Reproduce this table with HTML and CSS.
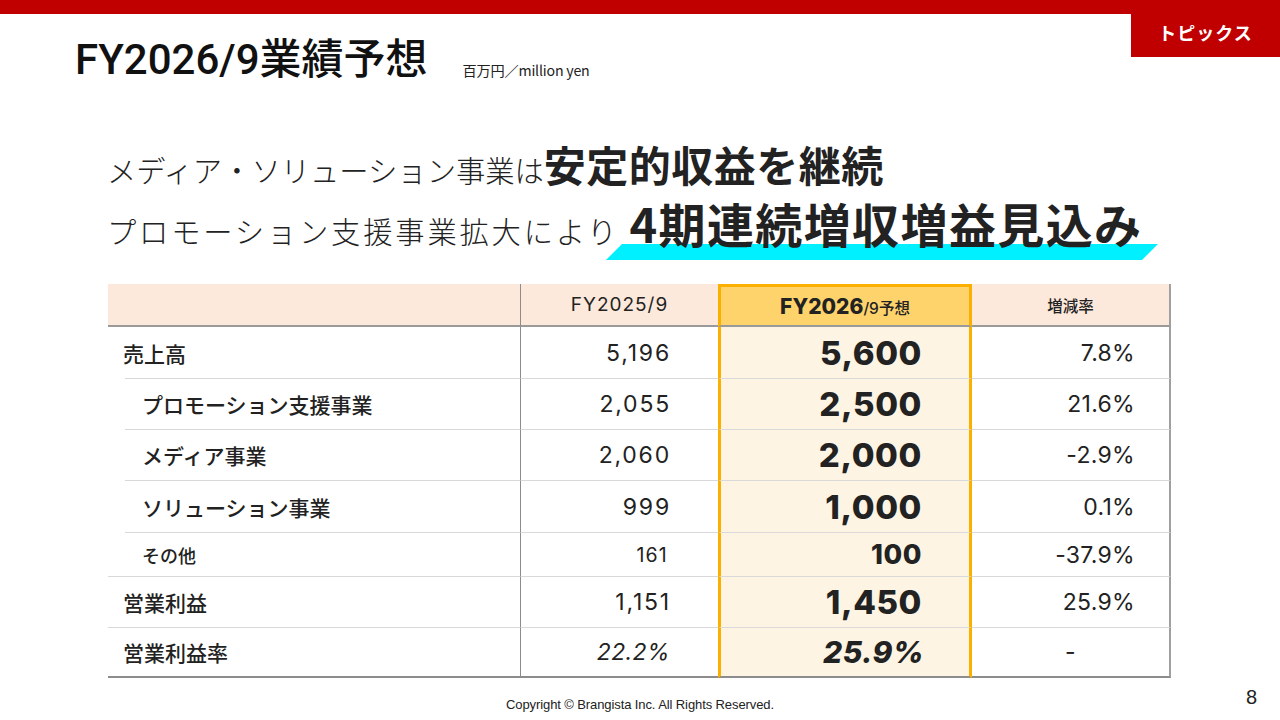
FILE: index.html
```html
<!DOCTYPE html>
<html lang="ja">
<head>
<meta charset="utf-8">
<title>FY2026/9業績予想</title>
<link rel="stylesheet" href="styles.css">
</head>
<body>
<div class="slide">
  <div class="topbar"></div>
  <header class="header">
    <div class="titlegroup">
      <h1 class="title">FY2026/9業績予想</h1>
      <span class="unit">百万円／million yen</span>
    </div>
    <div class="badge">トピックス</div>
  </header>

  <section class="lead">
    <p class="lead-line l1">メディア・ソリューション事業は<strong class="em1">安定的収益を継続</strong></p>
    <p class="lead-line l2">プロモーション支援事業拡大により<strong class="em2">4期連続増収増益見込み</strong></p>
  </section>

  <table class="pl">
    <thead>
      <tr>
        <th class="c1"></th>
        <th class="c2">FY2025/9</th>
        <th class="c3"><span class="fy">FY2026</span><span class="fysub">/9予想</span></th>
        <th class="c4">増減率</th>
      </tr>
    </thead>
    <tbody>
      <tr class="r-main sep-in">
        <td class="c1">売上高</td>
        <td class="c2">5,196</td>
        <td class="c3">5,600</td>
        <td class="c4">7.8%</td>
      </tr>
      <tr class="r-sub sep-in">
        <td class="c1">プロモーション支援事業</td>
        <td class="c2">2,055</td>
        <td class="c3">2,500</td>
        <td class="c4">21.6%</td>
      </tr>
      <tr class="r-sub sep-in">
        <td class="c1">メディア事業</td>
        <td class="c2">2,060</td>
        <td class="c3">2,000</td>
        <td class="c4">-2.9%</td>
      </tr>
      <tr class="r-sub sep-in r-tall">
        <td class="c1">ソリューション事業</td>
        <td class="c2">999</td>
        <td class="c3">1,000</td>
        <td class="c4">0.1%</td>
      </tr>
      <tr class="r-small">
        <td class="c1">その他</td>
        <td class="c2">161</td>
        <td class="c3">100</td>
        <td class="c4">-37.9%</td>
      </tr>
      <tr class="r-main">
        <td class="c1">営業利益</td>
        <td class="c2">1,151</td>
        <td class="c3">1,450</td>
        <td class="c4">25.9%</td>
      </tr>
      <tr class="r-main r-last">
        <td class="c1">営業利益率</td>
        <td class="c2 it">22.2%</td>
        <td class="c3 it">25.9%</td>
        <td class="c4 dash">-</td>
      </tr>
    </tbody>
  </table>

  <footer class="footer">
    <span class="copy">Copyright © Brangista Inc. All Rights Reserved.</span>
    <span class="pageno">8</span>
  </footer>
</div>
</body>
</html>
```

FILE: styles.css
```css
* { box-sizing: border-box; }
html, body { margin: 0; padding: 0; }
body {
  width: 1280px;
  height: 720px;
  overflow: hidden;
  background: #ffffff;
  color: #222222;
  font-family: "Noto Sans CJK JP", "Noto Sans", sans-serif;
}
.slide { width: 1280px; height: 720px; display: flex; flex-direction: column; }

.topbar { height: 14px; background: #c00000; flex: none; }

.header {
  display: flex;
  justify-content: space-between;
  align-items: flex-start;
  height: 86px;
  flex: none;
}
.titlegroup {
  display: flex;
  align-items: baseline;
  padding-left: 75px;
  padding-top: 22px;
}
.title {
  margin: 0;
  font-family: "Roboto", "Noto Sans CJK JP", sans-serif;
  font-weight: 500;
  font-size: 42px;
  line-height: 48px;
  color: #111111;
}
.unit {
  margin-left: 35px;
  font-size: 14.2px;
  color: #222222;
  letter-spacing: -0.2px;
  position: relative;
  top: 2px;
}
.badge {
  width: 149px;
  height: 43px;
  padding-bottom: 8px;
  background: #c00000;
  color: #ffffff;
  font-weight: 700;
  font-size: 18px;
  letter-spacing: 1px;
  display: flex;
  align-items: center;
  justify-content: center;
}

.lead { padding-left: 107px; padding-top: 37px; flex: none; }
.lead-line {
  margin: 0;
  font-weight: 300;
  font-size: 29.3px;
  color: #222222;
  white-space: nowrap;
}
.l1 { height: 54px; line-height: 54px; }
.l2 { height: 63px; line-height: 64px; letter-spacing: 2.8px; }
.em1 {
  font-weight: 700;
  font-size: 42px;
  letter-spacing: 0.5px;
  color: #222222;
}
.em2 {
  position: relative;
  z-index: 0;
  display: inline-block;
  margin-left: 10px;
  font-weight: 700;
  font-size: 47px;
  letter-spacing: 1.4px;
  color: #222222;
}
.em2::before {
  content: "";
  position: absolute;
  left: -15px;
  right: -8px;
  bottom: -5px;
  height: 16px;
  background: #00f0ff;
  transform: skewX(-45deg);
  z-index: -1;
}

.pl {
  margin-left: 108px;
  margin-top: 30px;
  border-collapse: separate;
  border-spacing: 0;
  table-layout: fixed;
  width: 1063px;
  flex: none;
}
.pl th, .pl td {
  padding: 0;
  white-space: nowrap;
  vertical-align: middle;
}
.pl th.c1, .pl td.c1 { width: 412px; }
.pl th.c2, .pl td.c2 { width: 198px; border-left: 1px solid #8c8c8c; }
.pl th.c3, .pl td.c3 { width: 254px; border-left: 3px solid #fbb000; border-right: 3px solid #fbb000; }
.pl th.c4, .pl td.c4 { width: 199px; border-right: 2px solid #a0a0a0; }

.pl thead th {
  height: 43px;
  background: #fde9db;
  border-bottom: 2px solid #9a9a9a;
  font-family: "Inter", "Noto Sans CJK JP", sans-serif;
  font-weight: 400;
  font-size: 19px;
  letter-spacing: 1px;
  text-align: center;
  color: #222222;
}
.pl thead th.c3 {
  background: #fed36c;
  border-top: 3px solid #fbb000;
  letter-spacing: 0;
}
.pl thead th.c4 { font-family: "Noto Sans CJK JP", sans-serif; font-size: 15.5px; font-weight: 500; letter-spacing: 0; }
.fy { font-weight: 800; font-size: 21px; }
.fysub { font-size: 15.5px; font-weight: 500; }

.pl tbody td {
  height: 51px;
  border-bottom: 1px solid #d9d9d9;
  font-family: "Inter", "Noto Sans CJK JP", sans-serif;
  font-size: 23px;
  color: #222222;
}
.pl tbody tr:first-child td { height: 52px; }
.pl tbody tr.r-tall td { height: 52px; }
.pl tbody tr.sep-in td.c1 {
  border-bottom-color: transparent;
  background-image: linear-gradient(#d9d9d9, #d9d9d9);
  background-repeat: no-repeat;
  background-origin: border-box;
  background-position: 17px 100%;
  background-size: calc(100% - 17px) 1px;
}
.pl tbody td.c1 {
  padding-left: 15px;
  font-family: "Noto Sans CJK JP", sans-serif;
  font-weight: 500;
  font-size: 21px;
}
.pl tbody tr.r-sub td.c1, .pl tbody tr.r-small td.c1 { padding-left: 34px; }
.pl tbody td.c2 { text-align: right; padding-right: 47px; letter-spacing: 1.8px; }
.pl tbody td.c3 {
  text-align: right;
  padding-right: 47px;
  background: #fdf4e3;
  font-weight: 800;
  font-size: 33px;
  letter-spacing: 0.6px;
}
.pl tbody td.c4 { text-align: right; padding-right: 34px; letter-spacing: 0.3px; }
.pl tbody tr.r-small td { height: 44px; }
.pl tbody tr.r-small td.c1 { font-size: 18px; }
.pl tbody tr.r-small td.c2 { font-size: 19.5px; padding-right: 50px; letter-spacing: 1.2px; }
.pl tbody tr.r-small td.c3 { font-size: 27px; }
.pl tbody tr.r-last td { height: 50px; border-bottom: 2px solid #8c8c8c; }
.pl tbody td.it { font-style: italic; }
.pl tbody td.c2.it { letter-spacing: 0.4px; padding-right: 48px; }
.pl tbody td.c3.it { font-size: 30px; padding-right: 45px; letter-spacing: 0.4px; }
.pl tbody td.dash { text-align: center; padding-right: 0; }

.footer {
  position: relative;
  flex: none;
  height: 42px;
  display: flex;
  align-items: center;
  justify-content: center;
}
.copy {
  font-family: "Liberation Sans", sans-serif;
  font-size: 13px;
  color: #222222;
  padding-top: 10px;
  letter-spacing: -0.1px;
}
.pageno {
  position: absolute;
  right: 23px;
  top: 8px;
  font-family: "Liberation Sans", sans-serif;
  font-size: 20px;
  color: #222222;
}
```
